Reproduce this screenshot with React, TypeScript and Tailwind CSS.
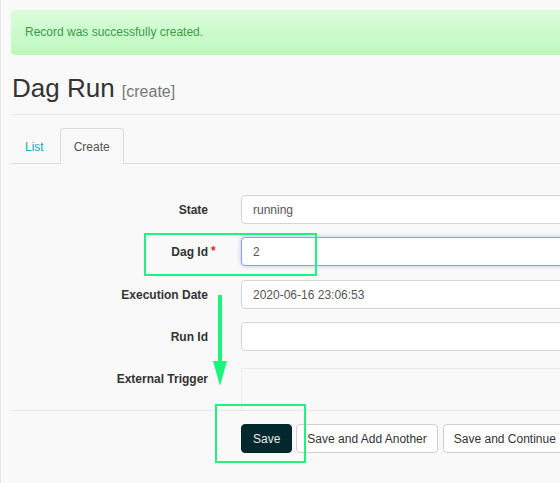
import React from "react";

type Field = {
  label: string;
  value: string;
  rowClass: string;
  required?: boolean;
  focused?: boolean;
};

const fields: Field[] = [
  { label: "State", value: "running", rowClass: "h-[42px]" },
  { label: "Dag Id", value: "2", rowClass: "h-[43px]", required: true, focused: true },
  { label: "Execution Date", value: "2020-06-16 23:06:53", rowClass: "h-[42px]" },
  { label: "Run Id", value: "", rowClass: "h-[42px]" },
];

const FormRow = ({ field }: { field: Field }) => (
  <div className={`flex ${field.rowClass}`}>
    <div className="flex h-[29px] w-[197px] shrink-0 items-center justify-end">
      <span className="relative text-[12px] font-bold text-[#333]">
        {field.label}
        {field.required && (
          <span className="absolute left-full top-[-1px] ml-[3px] text-[#e02424]">*</span>
        )}
      </span>
    </div>
    <div
      className={`ml-[33px] flex h-[29px] w-[400px] shrink-0 items-center rounded-[4px] border bg-white px-[11px] text-[12px] text-[#555] ${
        field.focused
          ? "border-[#8f9ff0] shadow-[0_0_4px_rgba(102,120,233,0.45)]"
          : "border-[#d4d4d4]"
      }`}
    >
      {field.value}
    </div>
  </div>
);

export default function App() {
  return (
    <div className="relative h-[483px] w-[560px] overflow-hidden border-l border-[#e8e8e8] bg-[#f9f9f9] font-['Liberation_Sans',Arial,sans-serif]">
      <div className="w-[620px] pl-[10px] pt-[10px]">
        <div className="h-[45px] rounded-[4px] bg-gradient-to-b from-[#dcfddc] to-[#bcf8bc] px-[14px] pt-[14px] text-[12px] leading-[17px] text-[#3a9c46]">
          Record was successfully created.
        </div>

        <h1 className="ml-[1px] mt-[19px] h-[29px] leading-[29px] text-[26px] font-normal text-[#333]">
          Dag Run <span className="text-[16px] text-[#777]">[create]</span>
        </h1>

        <div className="mt-[11px] h-px bg-[#eaeaea]" />

        <div className="mt-[13px] flex items-end border-b border-[#dddddd]">
          <div className="mb-[-1px] mr-[2px] border border-transparent px-[13px] pb-[7px] pt-[10px] text-[12px] leading-[17px] text-[#2aa3bd]">
            List
          </div>
          <div className="mb-[-1px] rounded-t-[4px] border border-[#dddddd] border-b-[#f9f9f9] bg-[#f9f9f9] px-[13px] pb-[7px] pt-[10px] text-[12px] leading-[17px] text-[#555]">
            Create
          </div>
        </div>

        <div className="pt-[31px]">
          {fields.map((f) => (
            <FormRow key={f.label} field={f} />
          ))}
          <div className="flex pt-[4px]">
            <div className="w-[197px] shrink-0 pt-[3px] text-right text-[12px] font-bold leading-[17px] text-[#333]">
              External Trigger
            </div>
            <div className="ml-[33px] h-[42px] w-[400px] shrink-0 border-l border-t border-[#ececec]" />
          </div>
        </div>

        <div className="h-px bg-[#e8e8e8]" />

        <div className="ml-[230px] mt-[13px] flex gap-[4px]">
          <button className="h-[29px] rounded-[4px] border border-[#00262b] bg-[#01282d] px-[11px] text-[12px] text-[#e4ecee]">
            Save
          </button>
          <button className="h-[29px] rounded-[4px] border border-[#d0d0d0] bg-white px-[10px] text-[12px] text-[#333]">
            Save and Add Another
          </button>
          <button className="ml-[1px] h-[29px] rounded-[4px] border border-[#d0d0d0] bg-white px-[10px] text-[12px] text-[#333]">
            Save and Continue
          </button>
        </div>
      </div>

      {/* annotations */}
      <div className="absolute left-[143px] top-[233px] h-[43px] w-[173px] border-2 border-[#1cf57c]" />
      <svg className="absolute left-[208px] top-[292px]" width="22" height="96" viewBox="0 0 22 96">
        <line x1="11" y1="3" x2="11" y2="72" stroke="#1cf57c" strokeWidth="4" />
        <polygon points="4,69 18,69 11,94" fill="#1cf57c" />
      </svg>
      <div className="absolute left-[214px] top-[404px] h-[59px] w-[91px] border-2 border-[#1cf57c]" />
    </div>
  );
}
